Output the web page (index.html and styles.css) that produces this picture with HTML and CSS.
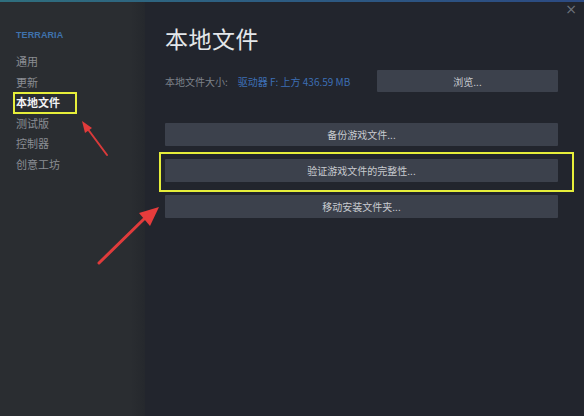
FILE: index.html
```html
<!DOCTYPE html>
<html lang="zh-CN">
<head>
<meta charset="utf-8">
<title>本地文件</title>
<link rel="stylesheet" href="styles.css">
</head>
<body>
<div class="topbar"></div>
<div class="layout">
  <aside class="sidebar">
    <div class="game">TERRARIA</div>
    <ul class="nav">
      <li>通用</li>
      <li>更新</li>
      <li class="active">本地文件</li>
      <li>测试版</li>
      <li>控制器</li>
      <li>创意工坊</li>
    </ul>
  </aside>
  <main class="main">
    <h1 class="title">本地文件</h1>
    <div class="size-row">
      <span class="label">本地文件大小:</span>
      <span class="value">驱动器 F: 上方 436.59 MB</span>
      <button class="btn browse">浏览...</button>
    </div>
    <div class="actions">
      <button class="btn">备份游戏文件...</button>
      <button class="btn">验证游戏文件的完整性...</button>
      <button class="btn">移动安装文件夹...</button>
    </div>
  </main>
</div>
<div class="close">×</div>
<svg class="annot" width="584" height="416" viewBox="0 0 584 416">
  <rect x="14" y="93" width="62" height="20" fill="none" stroke="#e6ee3a" stroke-width="2"/>
  <rect x="160" y="153" width="413" height="38" fill="none" stroke="#e6ee3a" stroke-width="2"/>
  <line x1="107" y1="155" x2="87" y2="128" stroke="#d93a3a" stroke-width="2" stroke-linecap="round"/>
  <polygon points="82,121 92,128 85,133" fill="#e03b3b"/>
  <line x1="99" y1="263" x2="145" y2="218" stroke="#e03b3b" stroke-width="3" stroke-linecap="round"/>
  <polygon points="159,207 150,226 139,213" fill="#e63c3c"/>
</svg>
</body>
</html>
```
FILE: styles.css
```css
html, body {
  margin: 0;
  padding: 0;
}
body {
  width: 584px;
  height: 416px;
  overflow: hidden;
  background: #22252d;
  font-family: "Noto Sans CJK SC", "Noto Sans", sans-serif;
  position: relative;
}
.topbar {
  height: 2px;
  background: linear-gradient(90deg, #2f6f7e 0%, #2d5d82 45%, #2c4a82 100%);
}
.layout {
  display: flex;
  height: 414px;
}
.sidebar {
  width: 145px;
  flex: none;
  background: linear-gradient(90deg, #2a2d31 0%, #2a2d31 90%, #25282d 100%);
  padding: 27px 0 0 16px;
  box-sizing: border-box;
}
.game {
  font-family: "Liberation Sans", Arial, sans-serif;
  font-size: 9px;
  font-weight: bold;
  color: #3f72ad;
  line-height: 12px;
  letter-spacing: 0.1px;
}
.nav {
  list-style: none;
  margin: 10px 0 0;
  padding: 0;
}
.nav li {
  font-size: 11px;
  line-height: 20.6px;
  height: 20.6px;
  color: #8a8e94;
}
.nav li.active {
  color: #f2f3f4;
  font-weight: bold;
}
.main {
  flex: 1;
  padding: 22px 26px 0 20px;
  background: #22252d;
}
.title {
  margin: 0;
  font-size: 23px;
  line-height: 28px;
  font-weight: normal;
  color: #e4e7ea;
  letter-spacing: 0.5px;
}
.size-row {
  margin-top: 18px;
  height: 22px;
  display: flex;
  align-items: center;
}
.label {
  font-size: 10px;
  color: #7d828a;
}
.value {
  margin-left: 10px;
  font-size: 10px;
  color: #3d6fb5;
}
.btn {
  border: none;
  margin: 0;
  padding: 0;
  background: #3c414c;
  color: #c8cbd0;
  font-family: "Noto Sans CJK SC", "Noto Sans", sans-serif;
  font-size: 10px;
  height: 23px;
  border-radius: 1px;
}
.browse {
  margin-left: auto;
  width: 181px;
  height: 22px;
}
.actions {
  margin-top: 31px;
  display: flex;
  flex-direction: column;
  gap: 13px;
}
.close {
  position: absolute;
  top: 1px;
  right: 7px;
  color: #6e737b;
  font-size: 14px;
  font-family: "DejaVu Sans", sans-serif;
  line-height: 16px;
}
.annot {
  position: absolute;
  left: 0;
  top: 0;
  pointer-events: none;
}
```
